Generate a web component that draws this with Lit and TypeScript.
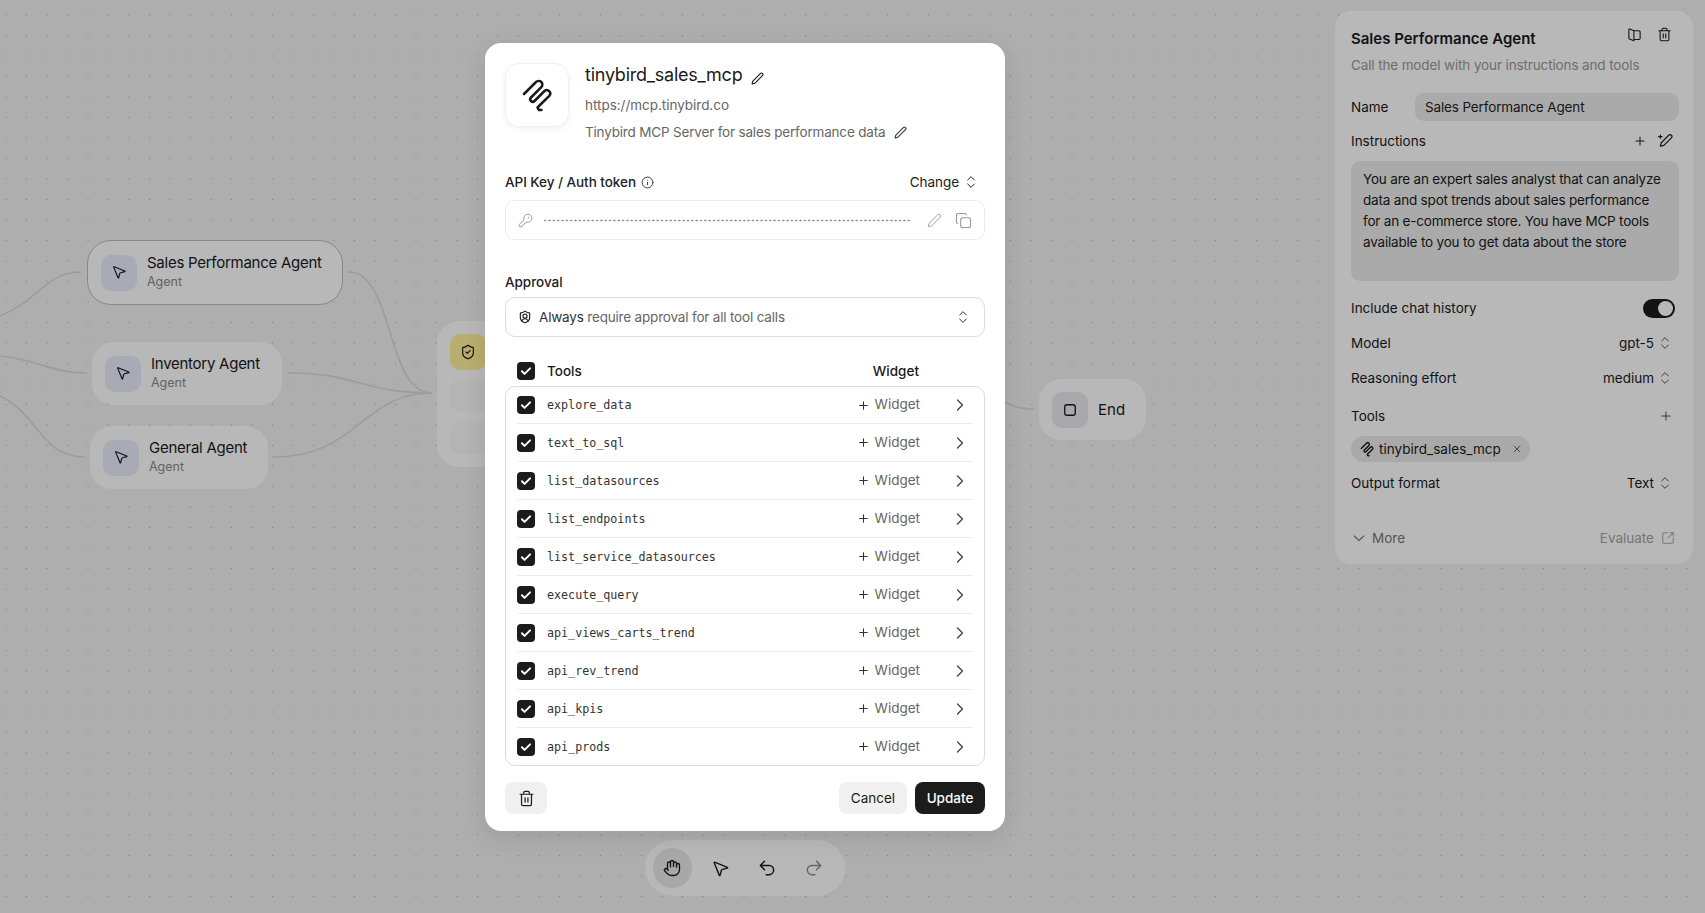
import { LitElement, html, css, svg } from "lit";
import { customElement } from "lit/decorators.js";

const P = {
  pencil: svg`<path d="M21.174 6.812a1 1 0 0 0-3.986-3.987L3.842 16.174a2 2 0 0 0-.5.83l-1.321 4.352a.5.5 0 0 0 .623.622l4.353-1.32a2 2 0 0 0 .83-.497z"/>`,
  key: svg`<path d="M2.586 17.414A2 2 0 0 0 2 18.828V21a1 1 0 0 0 1 1h3a1 1 0 0 0 1-1v-1a1 1 0 0 1 1-1h1a1 1 0 0 0 1-1v-1a1 1 0 0 1 1-1h.172a2 2 0 0 0 1.414-.586l.814-.814a6.5 6.5 0 1 0-4-4z"/><circle cx="16.5" cy="7.5" r=".5"/>`,
  copy: svg`<rect x="8" y="8" width="14" height="14" rx="3"/><path d="M4 16c-1.1 0-2-.9-2-2V5c0-1.7 1.3-3 3-3h9c1.1 0 2 .9 2 2"/>`,
  info: svg`<circle cx="12" cy="12" r="10"/><path d="M12 16v-4M12 8h.01"/>`,
  updown: svg`<path d="m7 15 5 5 5-5M7 9l5-5 5 5"/>`,
  trash: svg`<path d="M3 6h18M19 6v14c0 1-1 2-2 2H7c-1 0-2-1-2-2V6M8 6V4c0-1 1-2 2-2h4c1 0 2 1 2 2v2M10 11v6M14 11v6"/>`,
  hand: svg`<path d="M18 11V6a2 2 0 0 0-2-2a2 2 0 0 0-2 2M14 10V4a2 2 0 0 0-2-2a2 2 0 0 0-2 2v2M10 10.5V6a2 2 0 0 0-2-2a2 2 0 0 0-2 2v8M18 8a2 2 0 1 1 4 0v6a8 8 0 0 1-8 8h-2c-2.8 0-4.5-.86-5.99-2.34l-3.6-3.6a2 2 0 0 1 2.83-2.82L7 15"/>`,
  pointer: svg`<path d="M4.037 4.688a.495.495 0 0 1 .651-.651l16 6.5a.5.5 0 0 1-.063.947l-6.124 1.58a2 2 0 0 0-1.438 1.435l-1.579 6.126a.5.5 0 0 1-.947.063z"/>`,
  undo: svg`<path d="M9 14 4 9l5-5M4 9h10.5a5.5 5.5 0 0 1 5.5 5.5a5.5 5.5 0 0 1-5.5 5.5H11"/>`,
  redo: svg`<path d="m15 14 5-5-5-5M20 9H9.5A5.5 5.5 0 0 0 4 14.5A5.5 5.5 0 0 0 9.5 20H13"/>`,
  shieldCheck: svg`<path d="M20 13c0 5-3.5 7.5-7.66 8.95a1 1 0 0 1-.67-.01C7.5 20.5 4 18 4 13V6a1 1 0 0 1 1-1c2 0 4.5-1.2 6.24-2.72a1.17 1.17 0 0 1 1.52 0C14.51 3.81 17 5 19 5a1 1 0 0 1 1 1z"/><path d="m9 12 2 2 4-4"/>`,
  shieldUser: svg`<path d="M20 13c0 5-3.5 7.5-7.66 8.95a1 1 0 0 1-.67-.01C7.5 20.5 4 18 4 13V6a1 1 0 0 1 1-1c2 0 4.5-1.2 6.24-2.72a1.17 1.17 0 0 1 1.52 0C14.51 3.81 17 5 19 5a1 1 0 0 1 1 1z"/><path d="M6.4 18.9a6 6 0 0 1 11.2 0"/><circle cx="12" cy="10.5" r="3.5"/>`,
  book: svg`<path d="M11 6 4.5 3.2c-.8-.3-1.5.2-1.5 1V18c0 .5.3 1 .8 1.2L11 22V6zM11 6h8a2 2 0 0 1 2 2v10a2 2 0 0 1-2 2h-8"/>`,
  pencilSpark: svg`<path d="M21.6 7.4a1 1 0 0 0-4-4L6.8 14.2a2 2 0 0 0-.5.8l-1.2 4.2a.5.5 0 0 0 .6.6l4.2-1.2a2 2 0 0 0 .8-.5z"/><path d="M5 3v5M2.500 5.500h5"/>`,
  external: svg`<path d="M21 13v6a2 2 0 0 1-2 2H5a2 2 0 0 1-2-2V5a2 2 0 0 1 2-2h6M21 3l-9 9M15 3h6v6"/>`,
  chevDown: svg`<path d="m5 9 7 7 7-7"/>`,
  chevRight: svg`<path d="m9 18 6-6-6-6"/>`,
  x: svg`<path d="M18 6 6 18M6 6l12 12"/>`,
  plus: svg`<path d="M5 12h14M12 5v14"/>`,
  square: svg`<rect x="5" y="5" width="14" height="14" rx="3"/>`,
  check: svg`<path d="M5 12.5l4.5 4.5L19 7.500"/>`,
};

const icon = (p: unknown, size = 16, sw = 1.75, cls = "") => html`<svg class="ic ${cls}" width=${size} height=${size} viewBox="0 0 24 24" fill="none" stroke="currentColor" stroke-width=${sw} stroke-linecap="round" stroke-linejoin="round">${p}</svg>`;

const logo = (size: number, sw: number) => html`<svg class="ic" width=${size} height=${size} viewBox="14 14 36 36" fill="none" stroke="currentColor" stroke-width=${sw} stroke-linecap="round" stroke-linejoin="round"><path d="M19 31 31 19A3.700 3.700 0 0 1 36.300 24.200L26 34.500A2.400 2.400 0 0 0 29.500 38L39.500 28A3.400 3.400 0 0 1 44.300 32.800L32.500 44.500L34 47L36.500 47"/></svg>`;

const TOOLS = ["explore_data", "text_to_sql", "list_datasources", "list_endpoints", "list_service_datasources", "execute_query", "api_views_carts_trend", "api_rev_trend", "api_kpis", "api_prods"];

const NODES = [
  { name: "Sales Performance Agent", cls: "n1 sel" },
  { name: "Inventory Agent", cls: "n2" },
  { name: "General Agent", cls: "n3" },
];

@customElement("app-root")
export class AppRoot extends LitElement {
  static styles = css`
    :host { display: block; position: relative; width: 100%; height: 100vh; min-height: 913px; overflow: hidden; font-family: Inter, "Noto Sans", sans-serif; color: #1a1a1a; font-size: 14px; }
    * { box-sizing: border-box; }
    .ic { display: block; flex: none; }
    .canvas { position: absolute; inset: 0; background-color: #f2f2f2; background-image: radial-gradient(circle, #b0b0b0 0.6px, transparent 1px); background-size: 20.5px 20.5px; background-position: -4.25px 4.75px; }
    .edges { position: absolute; inset: 0; width: 100%; height: 100%; }
    .edges path { fill: none; stroke: #d9d9d9; stroke-width: 1.6; }
    .node { position: absolute; display: flex; align-items: center; gap: 10px; padding: 0 13px; background: #fff; border-radius: 22px; height: 63px; }
    .n1 { left: 87px; top: 240px; width: 256px; height: 65px; border: 1.5px solid #bdbdbd; border-radius: 24px; padding: 0 13px; }
    .n2 { left: 92px; top: 342px; width: 190px; }
    .n3 { left: 90px; top: 426px; width: 178px; }
    .tile { width: 36px; height: 36px; border-radius: 10px; background: #e9edfb; display: flex; align-items: center; justify-content: center; flex: none; }
    .tile .ptr { margin: -2px 0 0 -1px; }
    .node div { margin-top: -2px; }
    .node b { display: block; font-weight: 400; font-size: 15px; line-height: 20px; letter-spacing: -0.26px; white-space: nowrap; }
    .node small { display: block; font-size: 12.5px; line-height: 17px; color: #8a8a8a; }
    .guard { position: absolute; left: 437px; top: 321px; width: 100px; height: 146px; background: #fff; border-radius: 22px; padding: 13px; display: flex; flex-direction: column; gap: 9px; }
    .guard .tile { background: #fff19c; }
    .guard i { display: block; height: 36px; border-radius: 10px; background: #fafafa; }
    .end { left: 1039px; top: 379px; width: 107px; height: 61px; }
    .end .tile { background: #e9e9f0; }
    .end b { font-size: 15px; letter-spacing: 0; }

    .side { position: absolute; left: 1335px; top: 11px; width: 358px; height: 553px; background: #fff; border-radius: 16px; padding: 16px 14px 16px 16px; display: flex; flex-direction: column; font-size: 13.5px; }
    .side .hd { display: flex; justify-content: space-between; align-items: flex-start; height: 22px; }
    .side h2 { margin: 1px 0 0; font-size: 15px; font-weight: 600; line-height: 22px; }
    .side .hd div { display: flex; gap: 15px; padding-right: 7px; margin-top: 0; }
    .side .sub { color: #999; line-height: 20px; margin-top: 6px; letter-spacing: -0.13px; }
    .row { display: flex; align-items: center; justify-content: space-between; }
    .nm { margin-top: 18px; height: 28px; }
    .nm span.f { width: 264px; height: 28px; background: #ececec; border-radius: 9px; padding: 0 10px; line-height: 28px; display: block; color: #222; letter-spacing: -0.14px; }
    .ins { margin-top: 10px; height: 20px; }
    .ins div { display: flex; gap: 10px; align-items: center; padding-right: 6px; }
    .ta { margin-top: 10px; height: 120px; background: #ececec; border-radius: 9px; padding: 8px 12px; line-height: 21px; letter-spacing: -0.19px; }
    .chat { margin-top: 17px; height: 20px; }
    .toggle { width: 32px; height: 19px; border-radius: 10px; background: #1c1c1c; display: flex; justify-content: flex-end; padding: 2px; margin-right: 4px; }
    .toggle i { width: 15px; height: 15px; border-radius: 50%; background: #fff; display: block; }
    .sel-row { height: 20px; }
    .sel-row div { display: flex; align-items: center; gap: 3px; padding-right: 6px; }
    .sel-row .ic { color: #555; }
    .sel-row .pl { padding-right: 6px; }
    .chip { margin-top: 10px; width: 179px; height: 26px; border-radius: 13px; background: #ebebeb; display: flex; align-items: center; padding: 0 8px; gap: 4px; white-space: nowrap; letter-spacing: 0.03px; }
    .chip .ic:last-child { color: #555; margin-left: 6px; }
    .ft { margin-top: auto; height: 20px; color: #777; }
    .ft span { display: flex; align-items: center; gap: 5px; }
    .ft .ev { color: #a3a3a3; gap: 7px; padding-right: 4px; }

    .toolbar { position: absolute; left: 645px; top: 840px; width: 200px; height: 56px; border-radius: 28px; background: #fff; display: flex; align-items: center; padding: 0 8px; }
    .toolbar span { width: 48px; height: 40px; display: flex; align-items: center; justify-content: center; }
    .toolbar span.on { width: 40px; border-radius: 50%; background: #e9e9e9; margin-right: 5px; }
    .toolbar span.off { color: #8c8c8c; }

    .overlay { position: absolute; inset: 0; background: rgba(0, 0, 0, 0.28); }

    .modal { position: absolute; left: 485px; top: 43px; width: 520px; height: 788px; background: #fff; border-radius: 16px; padding: 20px 20px 17px; display: flex; flex-direction: column; box-shadow: 0 6px 24px rgba(0, 0, 0, 0.1); font-size: 13.5px; }
    .head { display: flex; gap: 16px; height: 79px; }
    .logo { width: 64px; height: 64px; border-radius: 14px; border: 1px solid #f0f0f0; box-shadow: 0 2px 6px rgba(0, 0, 0, 0.06); display: flex; align-items: center; justify-content: center; flex: none; }
    .htext { display: flex; flex-direction: column; }
    .t { display: flex; align-items: center; gap: 9px; font-size: 18px; line-height: 22px; height: 22px; margin-top: 1px; letter-spacing: -0.24px; }
    .t .ic { margin-top: 6px; }
    .u { color: #666; line-height: 20px; margin-top: 9px; letter-spacing: -0.03px; }
    .d { color: #666; line-height: 20px; margin-top: 7px; display: flex; align-items: center; gap: 9px; letter-spacing: -0.18px; }
    .d .ic { color: #333; }
    .lab { display: flex; align-items: center; justify-content: space-between; height: 20px; font-weight: 500; font-size: 13.5px; color: #222; letter-spacing: -0.04px; }
    .lab > span { display: flex; align-items: center; gap: 5px; }
    .lab .chg { font-weight: 400; gap: 4px; padding-right: 6px; }
    .key-lab { margin-top: 30px; }
    .input { margin-top: 8px; height: 40px; border: 1px solid #ebebeb; border-radius: 10px; display: flex; align-items: center; padding: 0 12px; color: #999; }
    .dots { flex: 1; margin: 0 15px 0 10px; height: 3px; background-image: radial-gradient(circle, #8f8f8f 0.85px, transparent 1.1px); background-size: 4.34px 3px; }
    .input .e { margin-right: 13px; }
    .appr { margin-top: 32px; }
    .select { margin-top: 5px; height: 40px; border: 1px solid #dcdcdc; border-radius: 10px; display: flex; align-items: center; padding: 0 13px 0 12px; gap: 7px; color: #666; letter-spacing: -0.18px; }
    .select em { font-style: normal; color: #333; }
    .select .ic:last-child { margin-left: auto; color: #333; }
    .select .ic:first-child { color: #222; }
    .thead { margin-top: 24px; height: 20px; display: flex; align-items: center; padding: 0 12px; gap: 12px; font-weight: 500; }
    .thead .w { margin-left: auto; margin-right: 54px; font-weight: 500; }
    .cb { width: 18px; height: 18px; border-radius: 4px; background: #1c1c1c; color: #fff; display: flex; align-items: center; justify-content: center; flex: none; }
    .list { margin-top: 5px; height: 380px; border: 1px solid #dcdcdc; border-radius: 10px; padding: 0 11px; display: flex; flex-direction: column; }
    .tr { height: 38px; flex: none; display: flex; align-items: center; gap: 12px; border-bottom: 1px solid #ececec; }
    .tr:first-child { height: 37px; }
    .tr:last-child { border-bottom: none; height: 37px; }
    .tr code { font-family: "DejaVu Sans Mono", monospace; font-size: 11.7px; color: #333; }
    .tr .add { margin-left: auto; display: flex; align-items: center; gap: 5px; color: #666; padding-bottom: 2px; }
    .tr .add .ic { color: #333; margin-top: 2px; }
    .tr .go { margin: 0 3px 0 18px; color: #444; }
    .foot { margin-top: 16px; height: 32px; display: flex; gap: 8px; }
    .btn { height: 32px; border-radius: 8px; display: flex; align-items: center; justify-content: center; background: #f0f0f0; color: #1c1c1c; font-size: 13.5px; }
    .btn.del { width: 42px; margin-right: auto; }
    .btn.can { width: 68px; }
    .btn.up { width: 70px; background: #1c1c1c; color: #fff; font-weight: 500; }
  `;

  private node(name: string, cls: string) {
    return html`<div class="node ${cls}"><span class="tile">${icon(P.pointer, 16, 1.75, "ptr")}</span><div><b>${name}</b><small>Agent</small></div></div>`;
  }

  private selRow(label: string, value: string, top: number) {
    return html`<div class="row sel-row" style="margin-top:${top}px"><span>${label}</span><div><span>${value}</span>${icon(P.updown, 16, 1.5)}</div></div>`;
  }

  render() {
    return html`
      <div class="canvas">
        <svg class="edges" viewBox="0 0 1705 913">
          <path d="M0 316C40 300 45 272 82 272"/>
          <path d="M0 356C40 360 50 373 87 373"/>
          <path d="M0 396C40 415 40 457 85 457"/>
          <path d="M348 272C395 272 385 393 432 393"/>
          <path d="M287 373C360 373 360 393 432 393"/>
          <path d="M273 457C360 457 360 393 432 393"/>
          <path d="M1005 402C1015 407 1020 409 1034 409"/>
        </svg>
        ${NODES.map((n) => this.node(n.name, n.cls))}
        <div class="guard"><span class="tile">${icon(P.shieldCheck, 16)}</span><i></i><i></i></div>
        <div class="node end"><span class="tile">${icon(P.square, 18)}</span><b>End</b></div>

        <aside class="side">
          <div class="hd"><h2>Sales Performance Agent</h2><div>${icon(P.book, 15)}${icon(P.trash, 15)}</div></div>
          <div class="sub">Call the model with your instructions and tools</div>
          <div class="row nm"><span>Name</span><span class="f">Sales Performance Agent</span></div>
          <div class="row ins"><span>Instructions</span><div>${icon(P.plus, 14)}${icon(P.pencilSpark, 16)}</div></div>
          <div class="ta">You are an expert sales analyst that can analyze data and spot trends about sales performance for an e-commerce store. You have MCP tools available to you to get data about the store</div>
          <div class="row chat"><span>Include chat history</span><span class="toggle"><i></i></span></div>
          ${this.selRow("Model", "gpt-5", 15)}
          ${this.selRow("Reasoning effort", "medium", 15)}
          <div class="row sel-row" style="margin-top:18px"><span>Tools</span><div class="pl">${icon(P.plus, 14)}</div></div>
          <div class="chip">${logo(16, 3.2)}<span>tinybird_sales_mcp</span>${icon(P.x, 12)}</div>
          ${this.selRow("Output format", "Text", 11)}
          <div class="row ft"><span>${icon(P.chevDown, 16)}More</span><span class="ev">Evaluate ${icon(P.external, 14)}</span></div>
        </aside>

        <div class="toolbar">
          <span class="on">${icon(P.hand, 18)}</span>
          <span>${icon(P.pointer, 19)}</span>
          <span>${icon(P.undo, 20)}</span>
          <span class="off">${icon(P.redo, 20)}</span>
        </div>
      </div>
      <div class="overlay"></div>

      <section class="modal">
        <div class="head">
          <div class="logo">${logo(36, 2.5)}</div>
          <div class="htext">
            <div class="t">tinybird_sales_mcp ${icon(P.pencil, 13, 2)}</div>
            <div class="u">https://mcp.tinybird.co</div>
            <div class="d">Tinybird MCP Server for sales performance data ${icon(P.pencil, 13, 2)}</div>
          </div>
        </div>
        <div class="lab key-lab"><span>API Key / Auth token ${icon(P.info, 13, 1.6)}</span><span class="chg">Change ${icon(P.updown, 16, 1.5)}</span></div>
        <div class="input">${icon(P.key, 15, 1.5)}<span class="dots"></span><span class="e">${icon(P.pencil, 15, 1.5)}</span>${icon(P.copy, 17, 1.5)}</div>
        <div class="lab appr"><span>Approval</span></div>
        <div class="select">${icon(P.shieldUser, 14, 2)}<span><em>Always</em> require approval for all tool calls</span>${icon(P.updown, 16, 1.5)}</div>
        <div class="thead"><span class="cb">${icon(P.check, 14, 3.4)}</span><span>Tools</span><span class="w">Widget</span></div>
        <div class="list">
          ${TOOLS.map((t) => html`<div class="tr"><span class="cb">${icon(P.check, 14, 3.4)}</span><code>${t}</code><span class="add">${icon(P.plus, 13, 2)}Widget</span><span class="go">${icon(P.chevRight, 20, 1.6)}</span></div>`)}
        </div>
        <div class="foot">
          <span class="btn del">${icon(P.trash, 17)}</span>
          <span class="btn can">Cancel</span>
          <span class="btn up">Update</span>
        </div>
      </section>
    `;
  }
}
